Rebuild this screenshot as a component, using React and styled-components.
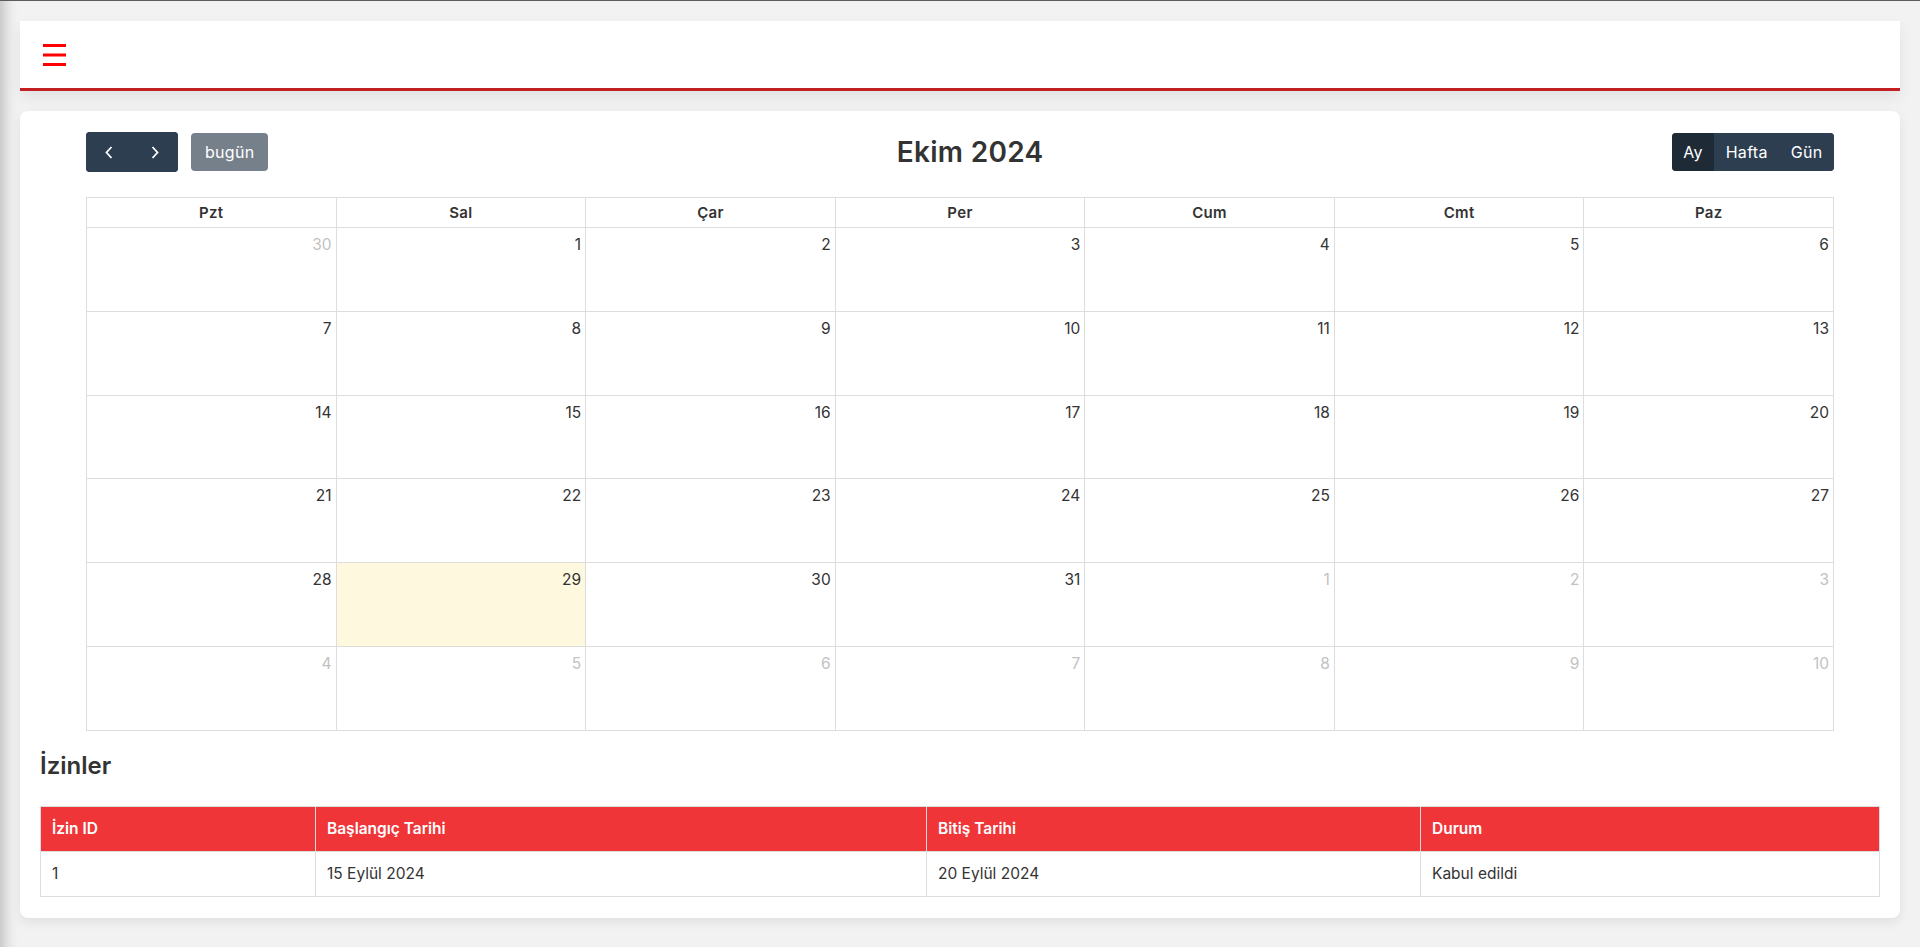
import React from "react";
import styled, { createGlobalStyle } from "styled-components";

const GlobalStyle = createGlobalStyle`
    html, body {
        margin: 0;
        padding: 0;
        background: #f2f2f2;
    }
    * {
        box-sizing: border-box;
    }
    body {
        font-family: Inter, "Noto Sans", "DejaVu Sans", sans-serif;
        color: #333;
    }
`;

const dayNames = ["Pzt", "Sal", "Çar", "Per", "Cum", "Cmt", "Paz"];

// Ekim 2024, pazartesi ile başlayan 6 haftalık ızgara
const buildDays = () => {
    const days = [];
    days.push({ n: 30, other: true });
    for (let i = 1; i <= 31; i++) days.push({ n: i, other: false, today: i === 29 });
    for (let i = 1; days.length < 42; i++) days.push({ n: i, other: true });
    return days;
};

const leaves = [
    { id: 1, start: "15 Eylül 2024", end: "20 Eylül 2024", status: "Kabul edildi" },
];

export default function App() {
    const days = buildDays();

    return (
        <Page>
            <GlobalStyle />
            <Header>
                <MenuButton aria-label="menu">
                    <svg width="23" height="22" viewBox="0 0 23 22">
                        <rect x="0" y="0" width="23" height="3" fill="#ff0000" />
                        <rect x="0" y="9.5" width="23" height="3" fill="#ff0000" />
                        <rect x="0" y="19" width="23" height="3" fill="#ff0000" />
                    </svg>
                </MenuButton>
            </Header>

            <Card>
                <Calendar>
                    <Toolbar>
                        <ToolbarChunk>
                            <ButtonGroup>
                                <NavButton aria-label="önceki">
                                    <svg width="8" height="13" viewBox="0 0 8 13">
                                        <path d="M6.5 1 L1.5 6.5 L6.5 12" fill="none" stroke="#fff" strokeWidth="1.8" />
                                    </svg>
                                </NavButton>
                                <NavButton aria-label="sonraki">
                                    <svg width="8" height="13" viewBox="0 0 8 13">
                                        <path d="M1.5 1 L6.5 6.5 L1.5 12" fill="none" stroke="#fff" strokeWidth="1.8" />
                                    </svg>
                                </NavButton>
                            </ButtonGroup>
                            <TodayButton>bugün</TodayButton>
                        </ToolbarChunk>
                        <Title>Ekim 2024</Title>
                        <ToolbarChunk>
                            <ButtonGroup>
                                <ViewButton $active>Ay</ViewButton>
                                <ViewButton>Hafta</ViewButton>
                                <ViewButton>Gün</ViewButton>
                            </ButtonGroup>
                        </ToolbarChunk>
                    </Toolbar>

                    <MonthGrid>
                        {dayNames.map((d) => (
                            <HeadCell key={d}>{d}</HeadCell>
                        ))}
                        {days.map((d, i) => (
                            <DayCell key={i} $today={d.today}>
                                <DayNumber $other={d.other}>{d.n}</DayNumber>
                            </DayCell>
                        ))}
                    </MonthGrid>
                </Calendar>

                <SectionTitle>İzinler</SectionTitle>
                <LeaveTable>
                    <thead>
                        <tr>
                            <Th style={{ width: 275 }}>İzin ID</Th>
                            <Th style={{ width: 611 }}>Başlangıç Tarihi</Th>
                            <Th style={{ width: 494 }}>Bitiş Tarihi</Th>
                            <Th>Durum</Th>
                        </tr>
                    </thead>
                    <tbody>
                        {leaves.map((l) => (
                            <tr key={l.id}>
                                <Td>{l.id}</Td>
                                <Td>{l.start}</Td>
                                <Td>{l.end}</Td>
                                <Td>{l.status}</Td>
                            </tr>
                        ))}
                    </tbody>
                </LeaveTable>
            </Card>
        </Page>
    );
}

const Page = styled.div`
    min-height: 100vh;
    background: #f2f2f2;
    border-top: 1px solid #5b5b62;
    padding: 20px 20px 28px;
    box-shadow: inset 16px 0 14px -12px rgba(0, 0, 0, 0.22); /* soldaki gölge */
`;

const Header = styled.header`
    height: 70px;
    background: #fff;
    border-bottom: 3px solid #c11f22;
    display: flex;
    align-items: center;
    padding: 0 23px;
    box-shadow: 0 6px 14px rgba(0, 0, 0, 0.07);
`;

const MenuButton = styled.div`
    display: flex;
    align-items: center;
    width: 23px;
    height: 22px;
    margin-top: 1px;
`;

const Card = styled.section`
    margin-top: 20px;
    background: #fff;
    border-radius: 8px;
    padding: 21px 20px 21px;
    box-shadow: 0 4px 12px rgba(0, 0, 0, 0.08);
`;

const Calendar = styled.div`
    width: 95%;
    margin: 0 auto;
`;

const Toolbar = styled.div`
    display: flex;
    align-items: center;
    justify-content: space-between;
    margin-bottom: 25px;
`;

const ToolbarChunk = styled.div`
    display: flex;
    align-items: center;
    gap: 13px;
`;

const Title = styled.h2`
    margin: 0;
    font-size: 28px;
    font-weight: 600;
    color: #333;
    letter-spacing: 0.3px;
`;

const ButtonGroup = styled.div`
    display: flex;
    border-radius: 4px;
    overflow: hidden;
    background: #2c3e50;
`;

const NavButton = styled.button`
    width: 46px;
    height: 40px;
    border: none;
    background: #2c3e50;
    display: flex;
    align-items: center;
    justify-content: center;
    padding: 0;
    cursor: pointer;
`;

const TodayButton = styled.button`
    height: 38px;
    padding: 0 14px;
    border: none;
    border-radius: 4px;
    background: #76808b;
    color: #fff;
    font-family: inherit;
    font-size: 16px;
    font-weight: 400;
    letter-spacing: 0.3px;
`;

const ViewButton = styled.button`
    height: 38px;
    padding: 0 11.5px;
    border: none;
    background: ${(p) => (p.$active ? "#1e2b37" : "#2c3e50")};
    color: #fff;
    font-family: inherit;
    font-size: 16px;
    font-weight: 400;
    letter-spacing: 0.3px;
    cursor: pointer;
`;

const MonthGrid = styled.div`
    display: grid;
    grid-template-columns: repeat(7, 1fr);
    grid-template-rows: 30px repeat(6, 83.8px);
    border-top: 1px solid #ddd;
    border-left: 1px solid #ddd;
`;

const HeadCell = styled.div`
    border-right: 1px solid #ddd;
    border-bottom: 1px solid #ddd;
    display: flex;
    align-items: center;
    justify-content: center;
    font-size: 15px;
    font-weight: 600;
    color: #333;
    letter-spacing: 0.3px;
`;

const DayCell = styled.div`
    border-right: 1px solid #ddd;
    border-bottom: 1px solid #ddd;
    background: ${(p) => (p.$today ? "#fef8de" : "#fff")};
    display: flex;
    justify-content: flex-end;
    align-items: flex-start;
    padding: 5px 4px 4px;
`;

const DayNumber = styled.span`
    font-size: 15.5px;
    line-height: 24px;
    color: ${(p) => (p.$other ? "#c2c2c2" : "#333")};
`;

const SectionTitle = styled.h3`
    margin: 20px 0 26px;
    font-size: 24px;
    line-height: 29px;
    font-weight: 600;
    color: #333;
`;

const LeaveTable = styled.table`
    width: 100%;
    border-collapse: collapse;
    font-size: 15.5px;
`;

const Th = styled.th`
    background: #ef3538;
    color: #fff;
    text-align: left;
    font-weight: 600;
    padding: 10px 11px;
    line-height: 24px;
    border: 1px solid #ddd;
`;

const Td = styled.td`
    padding: 10px 11px;
    line-height: 24px;
    color: #333;
    border: 1px solid #ddd;
`;
